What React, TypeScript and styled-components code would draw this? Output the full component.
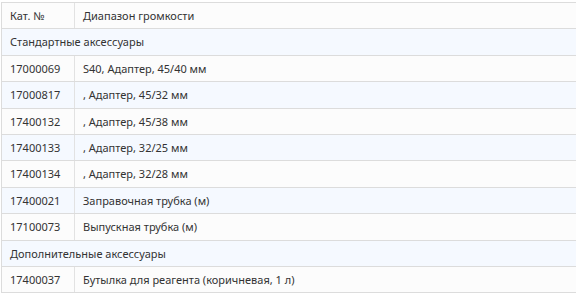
import styled, { createGlobalStyle } from 'styled-components';

const GlobalStyle = createGlobalStyle`
  body {
    margin: 0;
    background: #ffffff;
    font-family: "Noto Sans", "Open Sans", sans-serif;
  }
`;

const Wrapper = styled.div`
  padding: 2px 0 0 1px;
`;

const Table = styled.table`
  width: 575px;
  border-collapse: collapse;
  font-size: 11px;
  color: #333333;
`;

const Row = styled.tr<{ $shade: boolean }>`
  background: ${({ $shade }) => ($shade ? '#f5f9ff' : '#fcfcfc')};
`;

const Cell = styled.td<{ $first?: boolean }>`
  border-top: 1px solid #dcdcdc;
  border-bottom: 1px solid #dcdcdc;
  border-left: ${({ $first }) => ($first ? '1px solid #dcdcdc' : '1px solid #e2e2e2')};
  padding: 4px 8px 4px 8px;
  height: 17.4px;
  line-height: 17.4px;
  white-space: nowrap;
  text-align: left;
  font-weight: normal;
`;

const CodeCell = styled(Cell)`
  width: 56px;
`;

type Item = { code?: string; name: string; group?: boolean };

const rows: Item[] = [
  { code: 'Кат. №', name: 'Диапазон громкости' },
  { name: 'Стандартные аксессуары', group: true },
  { code: '17000069', name: 'S40, Адаптер, 45/40 мм' },
  { code: '17000817', name: ', Адаптер, 45/32 мм' },
  { code: '17400132', name: ', Адаптер, 45/38 мм' },
  { code: '17400133', name: ', Адаптер, 32/25 мм' },
  { code: '17400134', name: ', Адаптер, 32/28 мм' },
  { code: '17400021', name: 'Заправочная трубка (м)' },
  { code: '17100073', name: 'Выпускная трубка (м)' },
  { name: 'Дополнительные аксессуары', group: true },
  { code: '17400037', name: 'Бутылка для реагента (коричневая, 1 л)' },
];

export default function App() {
  return (
    <>
      <GlobalStyle />
      <Wrapper>
        <Table>
          <tbody>
            {rows.map((r, i) => (
              <Row key={i} $shade={i % 2 === 1}>
                {r.group ? (
                  <Cell $first colSpan={2}>{r.name}</Cell>
                ) : (
                  <>
                    <CodeCell $first>{r.code}</CodeCell>
                    <Cell>{r.name}</Cell>
                  </>
                )}
              </Row>
            ))}
          </tbody>
        </Table>
      </Wrapper>
    </>
  );
}
